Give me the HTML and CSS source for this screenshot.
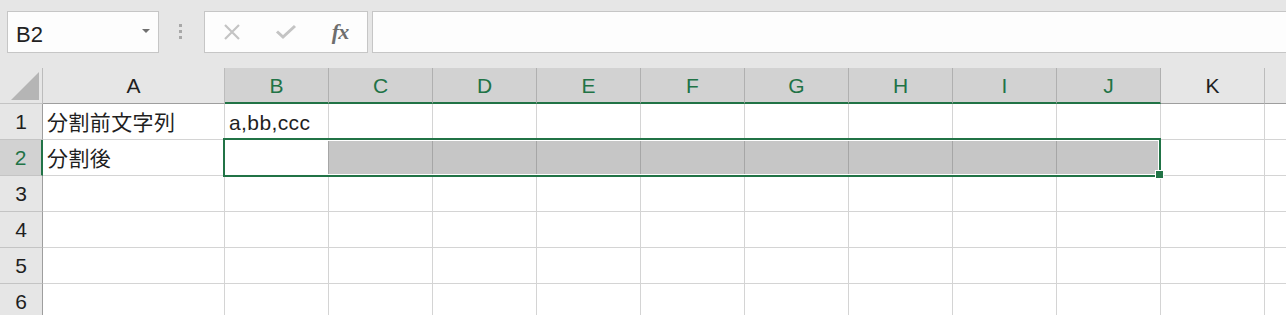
FILE: index.html
```html
<!DOCTYPE html>
<html lang="ja">
<head>
    <meta charset="UTF-8">
    <title>Book1 - Excel</title>
    <link rel="stylesheet" href="styles.css">
</head>
<body>

    <!-- Name box + formula bar -->
    <div class="toolbar">
        <div class="name-box">
            <span class="name-text">B2</span>
            <span class="drop"></span>
        </div>
        <div class="grip"><span></span><span></span><span></span></div>
        <div class="fx-buttons">
            <span class="fx-btn">
                <svg width="18" height="18" viewBox="0 0 18 18"><path d="M2 2 L16 16 M16 2 L2 16" stroke="#c4c4c4" stroke-width="2.2" fill="none"/></svg>
            </span>
            <span class="fx-btn">
                <svg width="22" height="16" viewBox="0 0 22 16"><path d="M2 7.5 L8 13 L20 2" stroke="#c4c4c4" stroke-width="3" fill="none"/></svg>
            </span>
            <span class="fx-btn fx">fx</span>
        </div>
        <div class="formula"></div>
    </div>

    <!-- Grid -->
    <div class="sheet">
        <div class="row head">
            <div class="cell rh corner">
                <svg class="tri" width="28" height="28" viewBox="0 0 28 28"><polygon points="28,0 28,28 0,28" fill="#b5b5b5"/></svg>
            </div>
            <div class="cell ca">A</div>
            <div class="cell on">B</div>
            <div class="cell on">C</div>
            <div class="cell on">D</div>
            <div class="cell on">E</div>
            <div class="cell on">F</div>
            <div class="cell on">G</div>
            <div class="cell on">H</div>
            <div class="cell on">I</div>
            <div class="cell on">J</div>
            <div class="cell">K</div>
            <div class="cell"></div>
        </div>
        <div class="row">
            <div class="cell rh">1</div>
            <div class="cell ca txt">分割前文字列</div>
            <div class="cell txt">a,bb,ccc</div>
            <div class="cell"></div><div class="cell"></div><div class="cell"></div><div class="cell"></div>
            <div class="cell"></div><div class="cell"></div><div class="cell"></div><div class="cell"></div>
            <div class="cell"></div><div class="cell"></div>
        </div>
        <div class="row">
            <div class="cell rh on">2</div>
            <div class="cell ca txt">分割後</div>
            <div class="cell active"></div>
            <div class="cell fill"></div><div class="cell fill"></div><div class="cell fill"></div><div class="cell fill"></div>
            <div class="cell fill"></div><div class="cell fill"></div><div class="cell fill"></div><div class="cell fill"></div>
            <div class="cell"></div><div class="cell"></div>
        </div>
        <div class="row">
            <div class="cell rh">3</div>
            <div class="cell ca"></div>
            <div class="cell"></div><div class="cell"></div><div class="cell"></div><div class="cell"></div><div class="cell"></div>
            <div class="cell"></div><div class="cell"></div><div class="cell"></div><div class="cell"></div><div class="cell"></div><div class="cell"></div>
        </div>
        <div class="row">
            <div class="cell rh">4</div>
            <div class="cell ca"></div>
            <div class="cell"></div><div class="cell"></div><div class="cell"></div><div class="cell"></div><div class="cell"></div>
            <div class="cell"></div><div class="cell"></div><div class="cell"></div><div class="cell"></div><div class="cell"></div><div class="cell"></div>
        </div>
        <div class="row">
            <div class="cell rh">5</div>
            <div class="cell ca"></div>
            <div class="cell"></div><div class="cell"></div><div class="cell"></div><div class="cell"></div><div class="cell"></div>
            <div class="cell"></div><div class="cell"></div><div class="cell"></div><div class="cell"></div><div class="cell"></div><div class="cell"></div>
        </div>
        <div class="row">
            <div class="cell rh">6</div>
            <div class="cell ca"></div>
            <div class="cell"></div><div class="cell"></div><div class="cell"></div><div class="cell"></div><div class="cell"></div>
            <div class="cell"></div><div class="cell"></div><div class="cell"></div><div class="cell"></div><div class="cell"></div><div class="cell"></div>
        </div>

        <!-- Selection B2:J2 -->
        <div class="selection"></div>
        <div class="handle"></div>
    </div>

</body>
</html>
```

FILE: styles.css
```css
body {
    margin: 0;
    width: 1286px;
    height: 315px;
    overflow: hidden;
    background-color: #e6e6e6;
    font-family: "Liberation Sans", "Noto Sans CJK JP", sans-serif;
    color: #1f1f1f;
}

/* toolbar */
.toolbar {
    display: flex;
    align-items: flex-start;
    height: 68px;
    padding: 11px 0 0 7px;
    box-sizing: border-box;
}

.name-box {
    width: 152px;
    height: 42px;
    box-sizing: border-box;
    border: 1px solid #c6c6c6;
    background-color: #fdfdfd;
    display: flex;
    align-items: center;
    justify-content: space-between;
    padding: 0 8px;
    flex-shrink: 0;
}

.name-text {
    font-size: 22px;
    margin-top: 6px;
    color: #222;
}

.drop {
    width: 0;
    height: 0;
    border-top: 4px solid #707070;
    border-left: 4px solid transparent;
    border-right: 4px solid transparent;
    margin-top: -2px;
}

.grip {
    margin: 13px 0 0 20px;
    display: flex;
    flex-direction: column;
    gap: 3px;
    flex-shrink: 0;
}

.grip span {
    width: 3px;
    height: 3px;
    background-color: #a8a8a8;
}

.fx-buttons {
    margin-left: 22px;
    width: 164px;
    height: 42px;
    box-sizing: border-box;
    border: 1px solid #c6c6c6;
    background-color: #fdfdfd;
    display: flex;
    flex-shrink: 0;
}

.fx-btn {
    flex: 1;
    display: flex;
    align-items: center;
    justify-content: center;
}

.fx {
    font-family: "Liberation Serif", serif;
    font-style: italic;
    font-weight: bold;
    font-size: 22px;
    color: #6e6e6e;
    letter-spacing: -1px;
}

.formula {
    margin-left: 4px;
    flex: 1;
    height: 42px;
    box-sizing: border-box;
    border: 1px solid #c6c6c6;
    border-right: none;
    background-color: #fdfdfd;
}

/* sheet */
.sheet {
    position: relative;
    background-color: #fff;
}

.row {
    display: flex;
    height: 36px;
}

.cell {
    width: 104px;
    flex-shrink: 0;
    box-sizing: border-box;
    border-right: 1px solid #d4d4d4;
    border-bottom: 1px solid #d4d4d4;
}

.cell.ca {
    width: 182px;
}

.head .cell {
    background-color: #e6e6e6;
    border-right-color: #bcbcbc;
    border-bottom-color: #9e9e9e;
    text-align: center;
    font-size: 21px;
    line-height: 35px;
}

.head .cell.on {
    background-color: #d2d2d2;
    color: #217346;
    border-right-color: #b0b0b0;
    border-bottom: 2px solid #217346;
}

.rh {
    width: 43px;
    background-color: #e6e6e6;
    border-right-color: #9e9e9e;
    border-bottom-color: #c4c4c4;
    text-align: center;
    font-size: 21px;
    line-height: 36px;
}

.rh.on {
    background-color: #d2d2d2;
    color: #217346;
    border-right: 2px solid #217346;
}

.head .corner {
    position: relative;
    border-right-color: #bcbcbc;
    border-bottom-color: #c4c4c4;
}

.tri {
    position: absolute;
    left: 11px;
    top: 4px;
}

.txt {
    padding-left: 4px;
    font-size: 21px;
    line-height: 38px;
    letter-spacing: 0.4px;
    white-space: nowrap;
}

.active {
    border-right-color: #a6a6a6;
}

.fill {
    background-color: #c6c6c6;
    border-right-color: #a6a6a6;
}

.selection {
    position: absolute;
    left: 223px;
    top: 70px;
    width: 938px;
    height: 39px;
    box-sizing: border-box;
    border: 2px solid #217346;
    box-shadow: inset 0 0 0 1px #fff;
}

.handle {
    position: absolute;
    left: 1156px;
    top: 103px;
    width: 7px;
    height: 7px;
    background-color: #217346;
    outline: 1px solid #fff;
}
```
